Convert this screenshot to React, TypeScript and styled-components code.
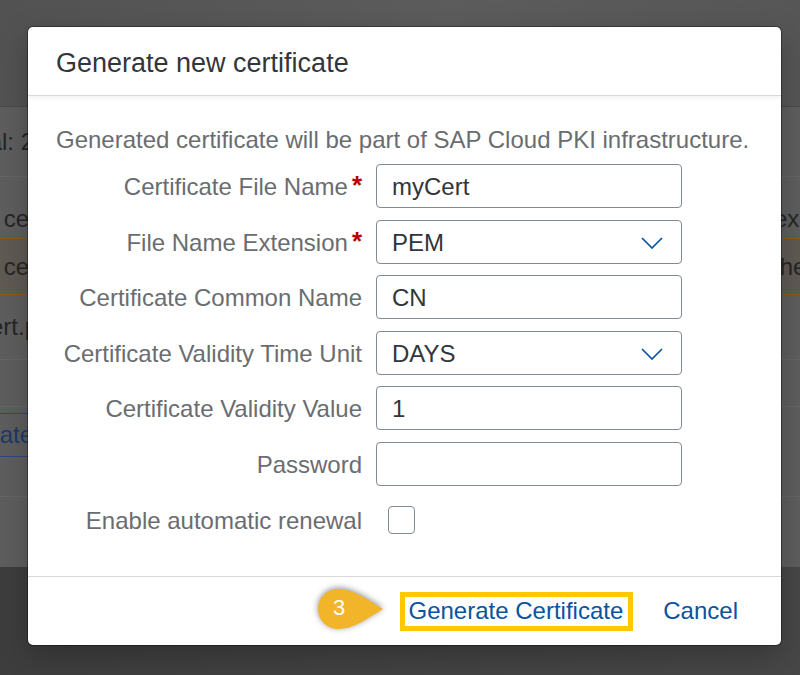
import React from "react";
import styled, { createGlobalStyle } from "styled-components";

const Global = createGlobalStyle`
  html, body { margin: 0; padding: 0; }
  body { font-family: "Liberation Sans", Arial, sans-serif; background: #414141; }
  * { box-sizing: border-box; }
`;

const Page = styled.div`
  position: relative;
  width: 800px;
  height: 675px;
  overflow: hidden;
  display: flex;
  flex-direction: column;
  background: linear-gradient(100deg, #3c3c3c, #474747);
`;

const TopBand = styled.div`
  height: 107px;
  flex: none;
  background: linear-gradient(100deg, #525252, #5c5c5c 55%, #565656);
  border-bottom: 1px solid #4a4a4a;
`;

const Panel = styled.div`
  height: 460px;
  flex: none;
  background: #5e5e5e;
  display: flex;
  flex-direction: column;
`;

const BgRow = styled.div<{ $h: number; $sel?: boolean; $line?: string; $align?: string; $pad?: string }>`
  height: ${(p) => p.$h}px;
  flex: none;
  display: flex;
  justify-content: space-between;
  align-items: ${(p) => p.$align ?? "center"};
  padding: ${(p) => p.$pad ?? "0"};
  border-bottom: 1px solid ${(p) => p.$line ?? "#666666"};
  background: ${(p) => (p.$sel ? "#5f5a54" : "transparent")};
  font-size: 24px;
  line-height: 28px;
  color: #262626;
`;

const LeftCell = styled.div<{ $w: number }>`
  width: ${(p) => p.$w}px;
  overflow: hidden;
  white-space: nowrap;
  display: flex;
  justify-content: flex-end;
`;

const RightCell = styled.div<{ $indent: number }>`
  width: 22px;
  overflow: hidden;
  white-space: nowrap;
  text-indent: ${(p) => p.$indent}px;
`;

const GhostButton = styled.div`
  width: 33px;
  height: 44px;
  overflow: hidden;
  white-space: nowrap;
  display: flex;
  justify-content: flex-end;
  align-items: center;
  border-top: 1px solid #2a4a80;
  border-bottom: 1px solid #2a4a80;
  color: #1f3966;
`;

const Dialog = styled.div`
  position: absolute;
  left: 28px;
  top: 27px;
  width: 753px;
  background: #ffffff;
  border-radius: 5px;
  box-shadow: 0 0 0 1px rgba(0, 0, 0, 0.35), 0 10px 30px rgba(0, 0, 0, 0.25);
  display: flex;
  flex-direction: column;
  overflow: hidden;
`;

const Header = styled.div`
  height: 69px;
  padding: 4px 28px 0 28px;
  display: flex;
  align-items: center;
  border-bottom: 1px solid #d9d9d9;
  box-shadow: 0 2px 4px rgba(0, 0, 0, 0.06);
  font-size: 27px;
  color: #32363a;
  position: relative;
  z-index: 1;
`;

const Content = styled.div`
  padding: 29px 28px 34px 28px;
  display: flex;
  flex-direction: column;
`;

const Description = styled.div`
  font-size: 24px;
  line-height: 28px;
  padding-top: 1px;
  color: #6a6d70;
  margin-bottom: 10px;
  white-space: nowrap;
`;

const Form = styled.div`
  display: grid;
  grid-template-columns: 306px 306px;
  grid-auto-rows: 44px;
  column-gap: 14px;
  row-gap: 11.6px;
  align-items: center;
`;

const Label = styled.div`
  font-size: 24px;
  color: #6a6d70;
  text-align: right;
  white-space: nowrap;
  display: flex;
  justify-content: flex-end;
  align-items: flex-start;
  padding-top: 2px;
`;

const Asterisk = styled.span`
  color: #bb0000;
  margin-left: 4px;
  font-size: 26px;
  line-height: 24px;
  font-weight: bold;
`;

const Field = styled.div<{ $select?: boolean }>`
  height: 44px;
  border: 1px solid #838a92;
  border-radius: 4px;
  background: #ffffff;
  display: flex;
  align-items: center;
  justify-content: space-between;
  padding: 2px ${(p) => (p.$select ? "18px" : "15px")} 0 15px;
  font-size: 24px;
  color: #32363a;
`;

const CheckCell = styled.div`
  height: 44px;
  display: flex;
  align-items: center;
  padding-left: 12px;
`;

const CheckBox = styled.div`
  width: 27px;
  height: 28px;
  border: 1px solid #838a92;
  border-radius: 4px;
  background: #ffffff;
`;

const Footer = styled.div`
  height: 69px;
  border-top: 1px solid #d9d9d9;
  display: flex;
  justify-content: flex-end;
  align-items: center;
  padding: 1px 43px 0 0;
  gap: 30px;
`;

const Highlight = styled.div`
  height: 39px;
  border: 5px solid #ffc800;
  display: flex;
  align-items: center;
  padding: 0 5px 0 4px;
`;

const LinkButton = styled.span`
  font-size: 24px;
  color: #0854a0;
  white-space: nowrap;
`;

const Callout = styled.div`
  position: absolute;
  left: 315px;
  top: 587px;
  width: 70px;
  height: 44px;
`;

const CalloutNumber = styled.span`
  position: absolute;
  left: 4px;
  top: 0;
  width: 40px;
  height: 42px;
  display: flex;
  align-items: center;
  justify-content: center;
  color: #ffffff;
  font-size: 22px;
`;

const Chevron = () => (
  <svg width="22" height="12" viewBox="0 0 22 12">
    <polyline points="1,1 11,11 21,1" fill="none" stroke="#0854a0" strokeWidth="1.7" />
  </svg>
);

type Row = { label: string; req?: boolean; value?: string; select?: boolean };

const rows: Row[] = [
  { label: "Certificate File Name", req: true, value: "myCert" },
  { label: "File Name Extension", req: true, value: "PEM", select: true },
  { label: "Certificate Common Name", value: "CN" },
  { label: "Certificate Validity Time Unit", value: "DAYS", select: true },
  { label: "Certificate Validity Value", value: "1" },
  { label: "Password", value: "" },
];

export default function App() {
  return (
    <>
      <Global />
      <Page>
        <TopBand />
        <Panel>
          <BgRow $h={70}>
            <LeftCell $w={34}>Total: 2</LeftCell>
          </BgRow>
          <BgRow $h={62} $align="flex-end" $pad="0 0 5px 0" $line="#8a5a22">
            <LeftCell $w={37}>cer</LeftCell>
            <RightCell $indent={-4}>expires</RightCell>
          </BgRow>
          <BgRow $h={56} $sel $line="#8a5a22">
            <LeftCell $w={37}>cer</LeftCell>
            <RightCell $indent={-5}>the</RightCell>
          </BgRow>
          <BgRow $h={65}>
            <LeftCell $w={38}>cert.p</LeftCell>
          </BgRow>
          <BgRow $h={47} />
          <BgRow $h={90} $align="flex-start" $pad="6px 0 0 0">
            <GhostButton>Generate</GhostButton>
          </BgRow>
        </Panel>

        <Dialog>
          <Header>Generate new certificate</Header>
          <Content>
            <Description>Generated certificate will be part of SAP Cloud PKI infrastructure.</Description>
            <Form>
              {rows.map((r) => (
                <React.Fragment key={r.label}>
                  <Label>
                    {r.label}
                    {r.req && <Asterisk>*</Asterisk>}
                  </Label>
                  <Field $select={r.select}>
                    <span>{r.value}</span>
                    {r.select && <Chevron />}
                  </Field>
                </React.Fragment>
              ))}
              <Label>Enable automatic renewal</Label>
              <CheckCell>
                <CheckBox />
              </CheckCell>
            </Form>
          </Content>
          <Footer>
            <Highlight>
              <LinkButton>Generate Certificate</LinkButton>
            </Highlight>
            <LinkButton>Cancel</LinkButton>
          </Footer>
        </Dialog>

        <Callout>
          <svg width="70" height="44" viewBox="0 0 70 44" style={{ filter: "drop-shadow(0 -1px 3px rgba(0,0,0,0.45))" }}>
            <path d="M23 2 C38 2 50 11 68 22 C50 33 38 42 23 42 A20 20 0 0 1 23 2 Z" fill="#f2b52a" />
          </svg>
          <CalloutNumber>3</CalloutNumber>
        </Callout>
      </Page>
    </>
  );
}
